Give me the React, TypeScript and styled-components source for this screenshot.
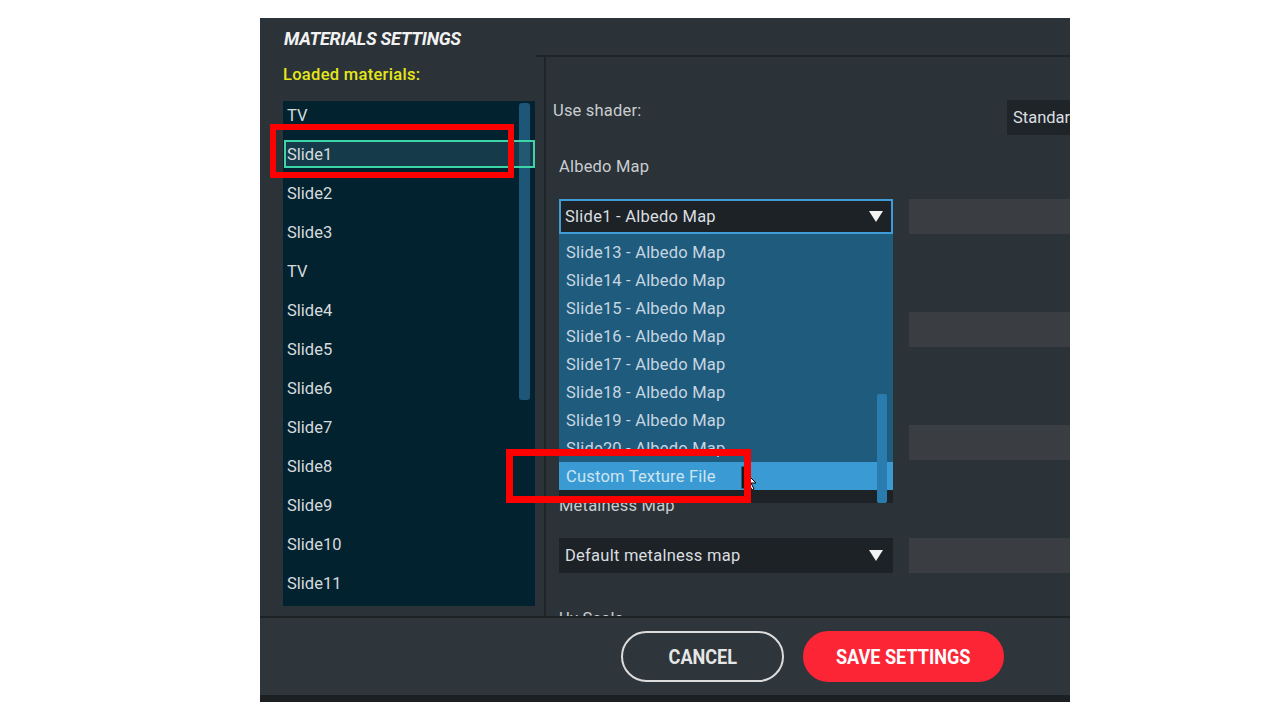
import React from "react";
import styled, { createGlobalStyle } from "styled-components";

const GlobalStyle = createGlobalStyle`
  html, body { margin: 0; padding: 0; background: #ffffff; }
  body { font-family: Roboto, "Liberation Sans", sans-serif; }
  * { box-sizing: border-box; }
`;

const Page = styled.div`
  position: relative;
  width: 1280px;
  height: 720px;
  padding: 18px 0 0 260px;
  overflow: hidden;
`;

const Dialog = styled.div`
  width: 810px;
  height: 684px;
  display: flex;
  flex-direction: column;
  background: #2b3338;
  overflow: hidden;
`;

const TitleBar = styled.div`
  height: 37px;
  flex: none;
  display: flex;
  align-items: center;
  padding: 4px 0 0 24px;
  color: #f2f2f2;
  font-size: 18px;
  font-weight: 700;
  font-style: italic;
  letter-spacing: -0.3px;
`;

const Body = styled.div`
  height: 561px;
  flex: none;
  display: flex;
`;

const LeftCol = styled.div`
  width: 276px;
  flex: none;
  padding: 10px 0 10px 23px;
  display: flex;
  flex-direction: column;
`;

const SectionTitle = styled.div`
  height: 20px;
  line-height: 20px;
  margin-bottom: 16px;
  color: #e6e61c;
  font-size: 16.5px;
  font-weight: 500;
  letter-spacing: 0.3px;
`;

const MaterialList = styled.div`
  position: relative;
  width: 252px;
  height: 505px;
  background: #03222f;
  overflow: hidden;
`;

const ListScroll = styled.div`
  position: absolute;
  left: 236px;
  top: 2px;
  width: 11px;
  height: 297px;
  border-radius: 3px;
  background: #1d5677;
`;

const MaterialItem = styled.div<{ $selected?: boolean }>`
  position: relative;
  z-index: 1;
  height: 28px;
  margin-bottom: 11px;
  margin-left: 1px;
  display: flex;
  align-items: center;
  padding-left: ${(p) => (p.$selected ? "1px" : "3px")};
  font-size: 16.5px;
  color: #d6dbde;
  border: ${(p) => (p.$selected ? "2px solid #3dd4a7" : "none")};
  background: ${(p) => (p.$selected ? "rgba(45, 90, 110, 0.45)" : "transparent")};
`;

const RightPanel = styled.div`
  flex: 1;
  display: flex;
  border-top: 2px solid #1e2427;
  padding-left: 8px;
`;

const PanelInner = styled.div`
  position: relative;
  flex: 1;
  border-left: 2px solid #1e2427;
  padding-top: 43px;
  overflow: hidden;
`;

const ShaderRow = styled.div`
  height: 35px;
  display: flex;
  align-items: flex-start;
`;

const FieldLabel = styled.div<{ $indent?: number }>`
  flex: 1;
  padding-left: ${(p) => p.$indent ?? 0}px;
  line-height: 22px;
  color: #c9cdd0;
  font-size: 16.5px;
  letter-spacing: 0.2px;
`;

const ShaderBox = styled.div`
  width: 63px;
  height: 35px;
  flex: none;
  background: #1e2428;
  color: #dcdfe1;
  font-size: 16.5px;
  line-height: 35px;
  padding-left: 6px;
  white-space: nowrap;
  overflow: hidden;
`;

const Section = styled.div<{ $first?: boolean }>`
  margin-top: ${(p) => (p.$first ? "20px" : "0")};
  margin-bottom: 34px;
  padding-left: 13px;
`;

const SectionLabel = styled.div`
  height: 24px;
  line-height: 24px;
  margin-bottom: 20px;
  color: #c9cdd0;
  font-size: 16.5px;
  letter-spacing: 0.2px;
`;

const FieldRow = styled.div`
  display: flex;
  gap: 16px;
  height: 35px;
`;

const SelectWrap = styled.div`
  position: relative;
  width: 334px;
  flex: none;
`;

const SelectBox = styled.div<{ $focused?: boolean }>`
  height: 35px;
  display: flex;
  align-items: center;
  justify-content: space-between;
  padding: 0 7px 0 4px;
  background: #1c2226;
  border: 2px solid ${(p) => (p.$focused ? "#3f9cd8" : "#1c2226")};
  color: #dadee0;
  font-size: 16.5px;
  letter-spacing: 0.25px;
`;

const SideBox = styled.div`
  flex: 1;
  height: 35px;
  background: #3a3e42;
`;

const Dropdown = styled.div`
  position: absolute;
  top: 100%;
  left: 0;
  width: 334px;
  height: 269px;
  display: flex;
  flex-direction: column;
  background: #1c2226;
  z-index: 5;
`;

const DropList = styled.div`
  background: #1f5b7d;
  padding-top: 4px;
`;

const DropItem = styled.div<{ $active?: boolean }>`
  height: 28px;
  line-height: 29px;
  padding-left: 7px;
  font-size: 16.5px;
  letter-spacing: 0.2px;
  color: ${(p) => (p.$active ? "#cfe4f1" : "#c6d6e0")};
  background: ${(p) => (p.$active ? "#3a9bd4" : "transparent")};
`;

const DropScroll = styled.div`
  position: absolute;
  right: 6px;
  top: 160px;
  bottom: 0;
  width: 10px;
  border-radius: 2px;
  background: #2a7cae;
`;

const Cursor = styled.svg`
  position: absolute;
  left: 182px;
  top: 232px;
  z-index: 6;
`;

const Footer = styled.div`
  height: 79px;
  flex: none;
  display: flex;
  align-items: center;
  justify-content: flex-end;
  padding-right: 66px;
  gap: 19px;
  background: #2e353b;
  border-top: 2px solid #1d2225;
`;

const BottomStrip = styled.div`
  height: 7px;
  flex: none;
  background: #1c2023;
`;

const PillButton = styled.button<{ $primary?: boolean }>`
  height: 51px;
  width: ${(p) => (p.$primary ? "201px" : "163px")};
  border-radius: 26px;
  border: 2px solid ${(p) => (p.$primary ? "#fc2536" : "#dcdcdc")};
  background: ${(p) => (p.$primary ? "#fc2536" : "transparent")};
  color: ${(p) => (p.$primary ? "#ffffff" : "#e6e6e6")};
  font-family: Roboto, "Liberation Sans", sans-serif;
  font-size: 21px;
  font-weight: 700;
  display: flex;
  align-items: center;
  justify-content: center;
  padding: 0;
`;

const ButtonLabel = styled.span`
  display: inline-block;
  transform: scaleX(0.86);
  white-space: nowrap;
`;

const Annotation = styled.div<{ $x: number; $y: number; $w: number; $h: number; $b: number }>`
  position: absolute;
  left: ${(p) => p.$x}px;
  top: ${(p) => p.$y}px;
  width: ${(p) => p.$w}px;
  height: ${(p) => p.$h}px;
  border: ${(p) => p.$b}px solid #ff0000;
  z-index: 20;
  pointer-events: none;
`;

const Caret = () => (
  <svg width="16" height="13" viewBox="0 0 16 13">
    <polygon points="1,1 15,1 8,12" fill="#f2f2f2" />
  </svg>
);

const materials = [
  "TV", "Slide1", "Slide2", "Slide3", "TV", "Slide4", "Slide5", "Slide6",
  "Slide7", "Slide8", "Slide9", "Slide10", "Slide11",
];

const albedoOptions = [13, 14, 15, 16, 17, 18, 19, 20].map((n) => `Slide${n} - Albedo Map`);

export default function App() {
  return (
    <>
      <GlobalStyle />
      <Page>
        <Dialog>
          <TitleBar>MATERIALS SETTINGS</TitleBar>
          <Body>
            <LeftCol>
              <SectionTitle>Loaded materials:</SectionTitle>
              <MaterialList>
                <ListScroll />
                {materials.map((m, i) => (
                  <MaterialItem key={i} $selected={i === 1}>
                    {m}
                  </MaterialItem>
                ))}
              </MaterialList>
            </LeftCol>
            <RightPanel>
              <PanelInner>
                <ShaderRow>
                  <FieldLabel $indent={7}>Use shader:</FieldLabel>
                  <ShaderBox>Standard</ShaderBox>
                </ShaderRow>

                <Section $first>
                  <SectionLabel>Albedo Map</SectionLabel>
                  <FieldRow>
                    <SelectWrap>
                      <SelectBox $focused>
                        <span>Slide1 - Albedo Map</span>
                        <Caret />
                      </SelectBox>
                      <Dropdown>
                        <DropList>
                          {albedoOptions.map((o) => (
                            <DropItem key={o}>{o}</DropItem>
                          ))}
                          <DropItem $active>Custom Texture File</DropItem>
                        </DropList>
                        <DropScroll />
                        <Cursor width="16" height="24" viewBox="0 0 16 24">
                          <rect x="0.5" y="0.5" width="3" height="22" fill="#1a1a1a" />
                          <path d="M4 6 L4 22 L8 18 L11 24 L13 23 L10 17 L15 17 Z" fill="#ffffff" stroke="#000000" strokeWidth="1" />
                        </Cursor>
                      </Dropdown>
                    </SelectWrap>
                    <SideBox />
                  </FieldRow>
                </Section>

                <Section>
                  <SectionLabel />
                  <FieldRow>
                    <SelectWrap>
                      <SelectBox>
                        <span />
                        <Caret />
                      </SelectBox>
                    </SelectWrap>
                    <SideBox />
                  </FieldRow>
                </Section>

                <Section>
                  <SectionLabel />
                  <FieldRow>
                    <SelectWrap>
                      <SelectBox>
                        <span />
                        <Caret />
                      </SelectBox>
                    </SelectWrap>
                    <SideBox />
                  </FieldRow>
                </Section>

                <Section>
                  <SectionLabel>Metalness Map</SectionLabel>
                  <FieldRow>
                    <SelectWrap>
                      <SelectBox>
                        <span>Default metalness map</span>
                        <Caret />
                      </SelectBox>
                    </SelectWrap>
                    <SideBox />
                  </FieldRow>
                </Section>

                <Section>
                  <SectionLabel>Uv Scale</SectionLabel>
                </Section>
              </PanelInner>
            </RightPanel>
          </Body>
          <Footer>
            <PillButton>
              <ButtonLabel>CANCEL</ButtonLabel>
            </PillButton>
            <PillButton $primary>
              <ButtonLabel>SAVE SETTINGS</ButtonLabel>
            </PillButton>
          </Footer>
          <BottomStrip />
        </Dialog>
        <Annotation $x={270} $y={124} $w={244} $h={54} $b={6} />
        <Annotation $x={506} $y={449} $w={245} $h={54} $b={7} />
      </Page>
    </>
  );
}
